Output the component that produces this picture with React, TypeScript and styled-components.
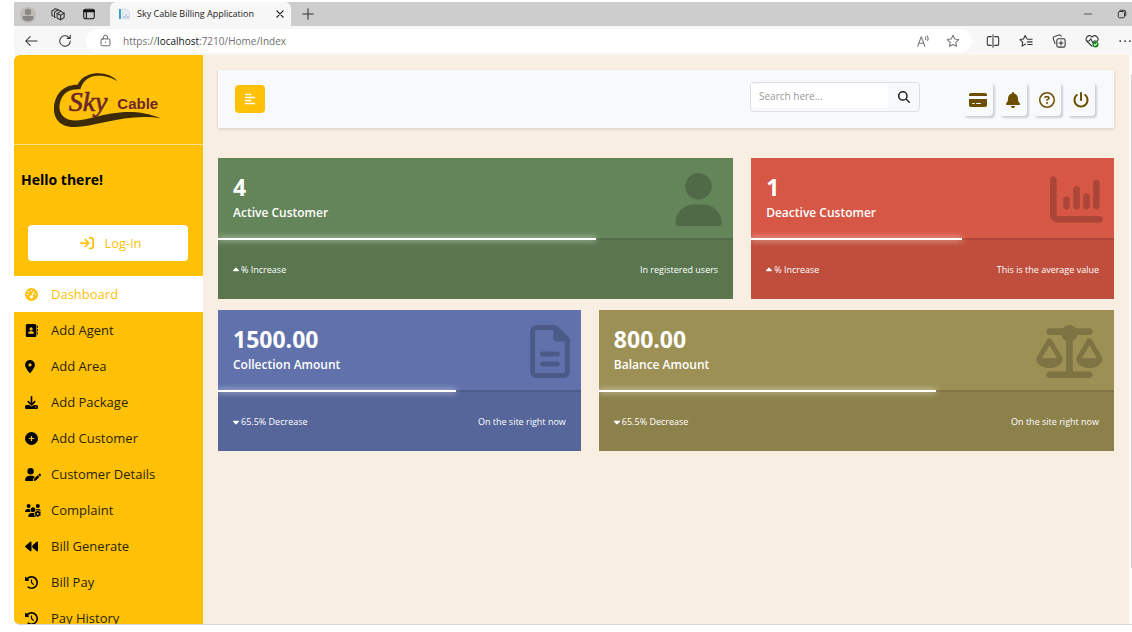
import React from "react";
import styled, { createGlobalStyle } from "styled-components";
import {
  FaAddressBook,
  FaAlignLeft,
  FaArrowRightToBracket,
  FaBackward,
  FaBell,
  FaCaretDown,
  FaCaretUp,
  FaChartColumn,
  FaCirclePlus,
  FaClockRotateLeft,
  FaCreditCard,
  FaDownload,
  FaGaugeHigh,
  FaLocationDot,
  FaMagnifyingGlass,
  FaPowerOff,
  FaRegCircleQuestion,
  FaRegFileLines,
  FaScaleBalanced,
  FaUser,
  FaUserPen,
  FaUsersGear,
} from "react-icons/fa6";

const Global = createGlobalStyle`
  *, *::before, *::after { box-sizing: border-box; }
  body {
    margin: 0;
    background: #fff;
    font-family: "Open Sans", "Noto Sans", sans-serif;
    color: #212529;
  }
  button, input { font: inherit; color: inherit; }
  button { border: 0; padding: 0; background: none; cursor: pointer; }
  a { color: inherit; text-decoration: none; }
  svg { display: block; flex: none; }
`;

const Frame = styled.div`
  display: flex;
  flex-direction: column;
  height: 100vh;
  padding: 2px 0 7px 14px;
  overflow: hidden;
`;

const TabStrip = styled.div`
  display: flex;
  align-items: stretch;
  height: 24px;
  background: #cdcdcd;
`;

const StripTools = styled.div`
  display: flex;
  align-items: center;
  gap: 17px;
  width: 96px;
  padding-left: 6px;
`;

const Tab = styled.div`
  display: flex;
  align-items: center;
  width: 181px;
  padding: 0 4px 0 7px;
  gap: 6px;
  border-radius: 6px 6px 0 0;
  background: #f7f7f7;
  font-size: 9px;
  line-height: 12px;
  color: #222;
  white-space: nowrap;
`;

const TabTitle = styled.span`
  flex: 1;
`;

const ChromeButton = styled.button`
  display: grid;
  place-items: center;
  width: 14px;
  height: 14px;
  flex: none;
`;

const NewTab = styled(ChromeButton)`
  align-self: center;
  margin-left: 10px;
`;

const WindowButtons = styled.div`
  display: flex;
  align-items: center;
  gap: 20px;
  margin-left: auto;
  padding-right: 3px;
`;

const AddressRow = styled.div`
  display: flex;
  align-items: center;
  height: 29px;
  padding-left: 10px;
  background: #f7f7f7;
`;

const NavButtons = styled.div`
  display: flex;
  gap: 20px;
  width: 62px;
`;

const AddressPill = styled.div`
  display: flex;
  flex: 1;
  align-items: center;
  gap: 11px;
  height: 24px;
  padding: 0 12px;
  border-radius: 12px;
  background: #fff;
`;

const Url = styled.div`
  flex: 1;
  font-size: 10px;
  line-height: 14px;
  color: #707070;

  b {
    font-weight: 400;
    color: #111;
  }
`;

const PillTools = styled.div`
  display: flex;
  gap: 16px;
`;

const BrowserTools = styled.div`
  display: flex;
  gap: 19px;
  padding-left: 14px;
`;

const Page = styled.div`
  display: flex;
  flex: 1;
  min-height: 0;
  overflow: hidden;
  border-radius: 6px 0 0 6px;
  border-bottom: 1px solid #d9d4ce;
  background: #f8eee2;
`;

const Sidebar = styled.aside`
  flex: none;
  width: 189px;
  overflow: hidden;
  background: #ffc107;
`;

const Brand = styled.div`
  display: flex;
  justify-content: center;
  height: 90px;
  padding: 11px 3px 0 0;
  border-bottom: 1px solid #ffe08a;
`;

const Greeting = styled.h1`
  margin: 0;
  padding: 25px 7px 35px;
  font-size: 14px;
  line-height: 20px;
  font-weight: 700;
  color: #000;
`;

const LoginButton = styled.button`
  display: flex;
  align-items: center;
  justify-content: center;
  gap: 10px;
  width: 160px;
  height: 36px;
  margin: 0 14px 15px;
  padding-left: 6px;
  border-radius: 4px;
  background: #fff;
  color: #ffc107;
  font-size: 13px;
  line-height: 18px;
`;

const Menu = styled.nav`
  display: flex;
  flex-direction: column;
`;

const MenuItem = styled.a<{ $active?: boolean }>`
  display: flex;
  flex: none;
  align-items: center;
  height: 36px;
  padding-left: 11px;
  background: ${(p) => (p.$active ? "#fff" : "transparent")};
  color: ${(p) => (p.$active ? "#ffc107" : "#2b2404")};
  font-size: 13px;
  line-height: 18px;

  svg {
    color: ${(p) => (p.$active ? "#ffc107" : "#000")};
  }
`;

const MenuIcon = styled.span<{ $width: number }>`
  width: 26px;

  svg {
    width: ${(p) => p.$width}px;
    height: 13px;
  }
`;

const Main = styled.main`
  flex: 1;
  min-width: 0;
  padding: 15px;
`;

const TopBar = styled.header`
  display: flex;
  align-items: center;
  height: 58px;
  padding: 0 19px 0 17px;
  background: #f8f9fb;
  box-shadow: 0 1px 3px rgba(0, 0, 0, 0.14);
`;

const ToggleButton = styled.button`
  display: grid;
  place-items: center;
  width: 30px;
  height: 28px;
  border-radius: 4px;
  background: #ffc107;
  color: #fff;
`;

const Search = styled.form`
  display: flex;
  width: 170px;
  height: 30px;
  margin: 0 43px 4px auto;
  border: 1px solid #dcdfe4;
  border-radius: 4px;
  overflow: hidden;
`;

const SearchInput = styled.input`
  flex: 1;
  min-width: 0;
  margin: 1px 0 3px;
  padding: 0 8px;
  border: 0;
  outline: 0;
  background: #fff;
  font-size: 10px;

  &::placeholder {
    color: #999;
    opacity: 1;
  }
`;

const SearchButton = styled.button`
  display: grid;
  place-items: center;
  width: 31px;
  color: #212529;
`;

const Actions = styled.div`
  display: flex;
  gap: 6px;
`;

const ActionButton = styled.button<{ $width: number }>`
  display: grid;
  place-items: center;
  min-width: 28px;
  height: 34px;
  padding: 2px 6px 0;
  border-radius: 4px;
  color: #6b4e00;
  background: #f8f9fb;
  box-shadow: 2px 2px 2px #ccd1d9;

  svg {
    width: ${(p) => p.$width}px;
    height: 16px;
  }
`;

const Cards = styled.section`
  display: grid;
  grid-template-columns: repeat(12, minmax(0, 1fr));
  gap: 11px 18px;
  padding-top: 30px;
`;

const Card = styled.article<{ $span: number; $color: string }>`
  display: flex;
  flex-direction: column;
  grid-column: span ${(p) => p.$span};
  height: 141px;
  background: ${(p) => p.$color};
  color: #fff;
`;

const CardHead = styled.div`
  display: flex;
  justify-content: space-between;
  height: 80px;
  padding: 15px 11px 0 15px;
`;

const Value = styled.h2`
  margin: 0;
  font-size: 23px;
  line-height: 28px;
  font-weight: 700;
`;

const Label = styled.h3`
  margin: 2px 0 0;
  font-size: 12px;
  line-height: 20px;
  font-weight: 600;
`;

const Emblem = styled.span<{ $width: number }>`
  color: rgba(0, 0, 0, 0.2);

  svg {
    width: ${(p) => p.$width}px;
    height: 53px;
  }
`;

const Track = styled.div`
  height: 2px;
  background: rgba(0, 0, 0, 0.18);
`;

const Bar = styled.div`
  position: relative;
  height: 2px;
  background: #fff;
  box-shadow: 0 0 6px #fff;
`;

const CardFoot = styled.div`
  display: flex;
  flex: 1;
  align-items: center;
  justify-content: space-between;
  padding: 0 15px;
  background: rgba(0, 0, 0, 0.1);
  font-size: 9px;
  line-height: 12px;
`;

const Trend = styled.span`
  display: flex;
  align-items: center;
  gap: 2px;

  svg {
    width: 6px;
    height: 10px;
  }
`;

const Scrollbar = styled.div`
  flex: none;
  width: 3px;
  padding: 20px 0 56px 2px;
  background: #fbfbfb;
`;

const Thumb = styled.div`
  height: 100%;
  background: #d0d0d0;
`;

type LineProps = { size?: number; color?: string; children: React.ReactNode };

const Line = ({ size = 14, color = "#333", children }: LineProps) => (
  <svg
    width={size}
    height={size}
    viewBox="0 0 16 16"
    fill="none"
    stroke={color}
    strokeWidth="1.2"
    strokeLinecap="round"
    strokeLinejoin="round"
    aria-hidden="true"
  >
    {children}
  </svg>
);

const Logo = () => (
  <svg width="122" height="66" viewBox="0 0 366 198" role="img" aria-label="Sky Cable">
    <path
      d="M215 46C200 28 175 20 150 22C122 25 103 38 95 56C55 55 28 82 24 122C21 160 45 183 85 183C150 183 240 140 345 157C270 125 200 140 150 152C110 162 80 168 62 158C38 146 36 120 46 98C56 76 78 68 103 70C110 45 128 30 155 29C180 28 200 36 215 46Z"
      fill="#3c2a08"
    />
    <text
      x="68"
      y="134"
      fill="#6d2727"
      stroke="#6d2727"
      strokeWidth="2"
      fontFamily="Liberation Serif, serif"
      fontStyle="italic"
      fontSize="84"
    >
      Sky
    </text>
    <text
      x="214"
      y="130"
      fill="#6d2727"
      fontFamily="Liberation Sans, sans-serif"
      fontWeight="700"
      fontSize="45"
    >
      Cable
    </text>
  </svg>
);

const menu = [
  { label: "Dashboard", Icon: FaGaugeHigh, width: 13 },
  { label: "Add Agent", Icon: FaAddressBook, width: 13 },
  { label: "Add Area", Icon: FaLocationDot, width: 10 },
  { label: "Add Package", Icon: FaDownload, width: 13 },
  { label: "Add Customer", Icon: FaCirclePlus, width: 13 },
  { label: "Customer Details", Icon: FaUserPen, width: 16 },
  { label: "Complaint", Icon: FaUsersGear, width: 16 },
  { label: "Bill Generate", Icon: FaBackward, width: 13 },
  { label: "Bill Pay", Icon: FaClockRotateLeft, width: 13 },
  { label: "Pay History", Icon: FaClockRotateLeft, width: 13 },
];

const actions = [
  { label: "Payments", Icon: FaCreditCard, width: 18 },
  { label: "Notifications", Icon: FaBell, width: 14 },
  { label: "Help", Icon: FaRegCircleQuestion, width: 16 },
  { label: "Sign out", Icon: FaPowerOff, width: 16 },
];

const cards = [
  { value: "4", label: "Active Customer", span: 7, color: "#648459", Icon: FaUser, width: 47, progress: 73.3, up: true, trend: "% Increase", note: "In registered users" },
  { value: "1", label: "Deactive Customer", span: 5, color: "#d65745", Icon: FaChartColumn, width: 53, progress: 58.2, up: true, trend: "% Increase", note: "This is the average value" },
  { value: "1500.00", label: "Collection Amount", span: 5, color: "#6071ac", Icon: FaRegFileLines, width: 40, progress: 65.5, up: false, trend: "65.5% Decrease", note: "On the site right now" },
  { value: "800.00", label: "Balance Amount", span: 7, color: "#9d9054", Icon: FaScaleBalanced, width: 67, progress: 65.5, up: false, trend: "65.5% Decrease", note: "On the site right now" },
];

export default function App() {
  return (
    <>
      <Global />
      <Frame>
        <TabStrip>
          <StripTools>
            <ChromeButton aria-label="Profile">
              <svg width="16" height="16" viewBox="0 0 16 16">
                <circle cx="8" cy="8" r="8" fill="#bdb9b5" />
                <circle cx="8" cy="5" r="3.2" fill="#8a8683" />
                <path d="M2.5 10.5c0-1 .6-1.5 1.5-1.5h8c.9 0 1.5.5 1.5 1.5C13 13 11 14.2 8 14.2S3 13 2.5 10.5Z" fill="#8a8683" />
              </svg>
            </ChromeButton>
            <ChromeButton aria-label="Workspaces">
              <Line>
                <path d="M7 7.5 11 5l4 2v5l-4 2.5-4-2Z" />
                <path d="m7 7.5 4 2 4-2.5M11 9.5v5M5 12 4 11.5V6l4-2.5 3.5 1.2M2.5 10.5 1 9.7V4.5L5 2l3.5 1.2" />
              </Line>
            </ChromeButton>
            <ChromeButton aria-label="Tab actions">
              <Line color="#111">
                <rect x="2" y="2.5" width="12" height="11" rx="2" />
                <path d="M2 4h12M2 5.3h12M5 5v8" />
              </Line>
            </ChromeButton>
          </StripTools>
          <Tab>
            <svg width="14" height="14" viewBox="0 0 14 14" aria-hidden="true">
              <path d="M3 2v10" stroke="#3b9bd0" strokeWidth="2" />
              <path d="M5.5 2h4l3 3v7h-7Z" fill="#e8edf3" stroke="#d3dbe4" />
              <path d="M7 11V9M9 11V7M11 11V9" stroke="#a9bbd0" />
            </svg>
            <TabTitle>Sky Cable Billing Application</TabTitle>
            <ChromeButton aria-label="Close tab">
              <Line size={10} color="#111">
                <path d="m3 3 10 10M13 3 3 13" strokeWidth="1.8" />
              </Line>
            </ChromeButton>
          </Tab>
          <NewTab aria-label="New tab">
            <Line>
              <path d="M8 2v12M2 8h12" />
            </Line>
          </NewTab>
          <WindowButtons>
            <ChromeButton aria-label="Minimize">
              <Line size={10}>
                <path d="M2 8h12" />
              </Line>
            </ChromeButton>
            <ChromeButton aria-label="Restore">
              <Line size={10}>
                <rect x="2" y="4" width="10" height="10" rx="2" strokeWidth="1.6" />
                <path d="M5 2h6a3 3 0 0 1 3 3v6" strokeWidth="1.6" />
              </Line>
            </ChromeButton>
          </WindowButtons>
        </TabStrip>

        <AddressRow>
          <NavButtons>
            <ChromeButton aria-label="Back">
              <Line>
                <path d="M15 8H2M7 3 2 8l5 5" />
              </Line>
            </ChromeButton>
            <ChromeButton aria-label="Reload">
              <Line>
                <path d="M14 8a6 6 0 1 1-2-4.5L14 5M14 1.5V5h-3.5" />
              </Line>
            </ChromeButton>
          </NavButtons>
          <AddressPill>
            <ChromeButton aria-label="Site information">
              <Line size={13} color="#666">
                <rect x="2.5" y="6" width="11" height="8.5" rx="1.5" />
                <path d="M5.5 6V4a2.5 2.5 0 0 1 5 0v2M8 10v.5" />
              </Line>
            </ChromeButton>
            <Url>
              https://<b>localhost</b>:7210/Home/Index
            </Url>
            <PillTools>
              <ChromeButton aria-label="Read aloud">
                <Line color="#777">
                  <path d="M2 14 6 3l4 11M3.5 10.5h5M10.5 3.5a3 3 0 0 1 .5 3M12.5 2a5 5 0 0 1 .8 5.5" />
                </Line>
              </ChromeButton>
              <ChromeButton aria-label="Add to favorites">
                <Line color="#777">
                  <path d="m8 1.5 2 4.2 4.600.6-3.400 3.200.9 4.600L8 11.900l-4.100 2.200.9-4.600L1.400 6.300l4.600-.6Z" />
                </Line>
              </ChromeButton>
            </PillTools>
          </AddressPill>
          <BrowserTools>
            <ChromeButton aria-label="Split screen">
              <Line>
                <path d="M8 1v14M6 3H3a1.5 1.5 0 0 0-1.5 1.5v7A1.5 1.5 0 0 0 3 13h3M10 3h3a1.5 1.5 0 0 1 1.5 1.5v7A1.5 1.5 0 0 1 13 13h-3" />
              </Line>
            </ChromeButton>
            <ChromeButton aria-label="Favorites">
              <Line>
                <path d="M9 5.5 7 1.8 5.2 5.7l-4 .6 3 3-.7 4.6L7.5 11.5M10 6h5M9.5 9h5.5M10 12h5" />
              </Line>
            </ChromeButton>
            <ChromeButton aria-label="Collections">
              <Line>
                <rect x="5.5" y="5.5" width="9.5" height="9.5" rx="2" />
                <path d="M10.3 8v4.5M8 10.3h4.5M3.5 11 1.5 5.5a2 2 0 0 1 1-2.5L8 1.2a2 2 0 0 1 2.5 1.3" />
              </Line>
            </ChromeButton>
            <ChromeButton aria-label="Browser essentials">
              <Line>
                <path d="M8 14 2 8.2A3.7 3.7 0 0 1 8 3.5a3.7 3.7 0 0 1 6 4.7M1.5 8H5l1.5-2.5L9 10l1.5-2H13" />
                <circle cx="12" cy="12" r="3.5" fill="#15881b" stroke="none" />
                <path d="m10.5 12 1 1 2-2" stroke="#fff" />
              </Line>
            </ChromeButton>
            <ChromeButton aria-label="More">
              <Line>
                <path d="M2.5 8h.1M8 8h.1M13.5 8h.1" strokeWidth="2" />
              </Line>
            </ChromeButton>
          </BrowserTools>
        </AddressRow>

        <Page>
          <Sidebar>
            <Brand>
              <Logo />
            </Brand>
            <Greeting>Hello there!</Greeting>
            <LoginButton>
              <FaArrowRightToBracket size={14} />
              Log-in
            </LoginButton>
            <Menu>
              {menu.map(({ label, Icon, width }, i) => (
                <MenuItem key={label} href="#" $active={i === 0}>
                  <MenuIcon $width={width}>
                    <Icon />
                  </MenuIcon>
                  {label}
                </MenuItem>
              ))}
            </Menu>
          </Sidebar>

          <Main>
            <TopBar>
              <ToggleButton aria-label="Toggle menu">
                <FaAlignLeft size={12} />
              </ToggleButton>
              <Search onSubmit={(e) => e.preventDefault()}>
                <SearchInput aria-label="Search" placeholder="Search here..." />
                <SearchButton aria-label="Search">
                  <FaMagnifyingGlass size={12} />
                </SearchButton>
              </Search>
              <Actions>
                {actions.map(({ label, Icon, width }) => (
                  <ActionButton key={label} $width={width} aria-label={label}>
                    <Icon />
                  </ActionButton>
                ))}
              </Actions>
            </TopBar>

            <Cards>
              {cards.map(({ value, label, span, color, Icon, width, progress, up, trend, note }) => (
                <Card key={label} $span={span} $color={color}>
                  <CardHead>
                    <div>
                      <Value>{value}</Value>
                      <Label>{label}</Label>
                    </div>
                    <Emblem $width={width}>
                      <Icon />
                    </Emblem>
                  </CardHead>
                  <Track>
                    <Bar style={{ width: `${progress}%` }} />
                  </Track>
                  <CardFoot>
                    <Trend>
                      {up ? <FaCaretUp /> : <FaCaretDown />}
                      {trend}
                    </Trend>
                    <span>{note}</span>
                  </CardFoot>
                </Card>
              ))}
            </Cards>
          </Main>
          <Scrollbar>
            <Thumb />
          </Scrollbar>
        </Page>
      </Frame>
    </>
  );
}
